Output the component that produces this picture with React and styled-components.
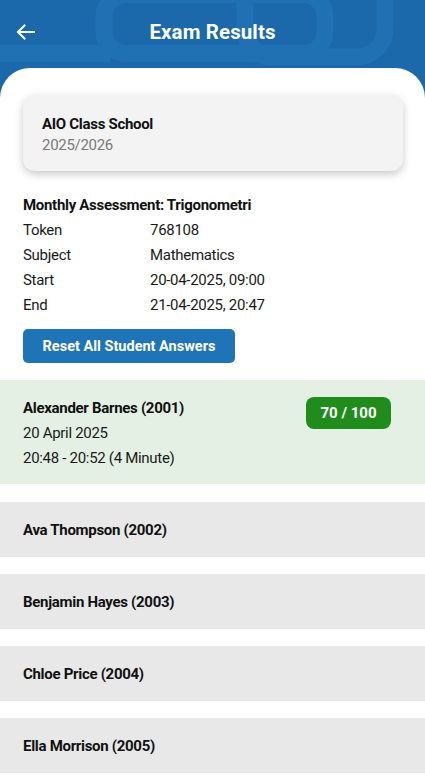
import React from "react";
import styled, { createGlobalStyle } from "styled-components";

const GlobalStyle = createGlobalStyle`
  html, body { margin: 0; padding: 0; background: #ffffff; }
  body { font-family: Roboto, "Noto Sans", "Liberation Sans", sans-serif; color: #111; }
  * { box-sizing: border-box; }
`;

const Page = styled.div`
  width: 425px;
  min-height: 783px;
  background: #ffffff;
  overflow: hidden;
`;

const Header = styled.header`
  position: relative;
  height: 98px;
  background: #1b68ab;
  overflow: hidden;
`;

const Pattern = styled.svg`
  position: absolute;
  inset: 0;
`;

const HeaderBar = styled.div`
  position: relative;
  height: 64px;
  display: flex;
  align-items: center;
  justify-content: center;
`;

const BackButton = styled.button`
  position: absolute;
  left: 12px;
  top: 20px;
  width: 26px;
  height: 24px;
  padding: 0;
  border: none;
  background: transparent;
  display: flex;
  align-items: center;
  justify-content: center;
`;

const Title = styled.h1`
  margin: 0;
  font-size: 20.5px;
  font-weight: 700;
  color: #ffffff;
  letter-spacing: 0.1px;
`;

const Sheet = styled.main`
  position: relative;
  margin-top: -30px;
  background: #ffffff;
  border-radius: 30px 30px 0 0;
  padding-top: 27px;
`;

const SchoolCard = styled.section`
  margin: 0 22px 0 23px;
  height: 76px;
  background: #f3f3f3;
  border-radius: 12px;
  box-shadow: 0 3px 8px rgba(0, 0, 0, 0.22);
  padding: 21px 19px 18px;
  display: flex;
  flex-direction: column;
  justify-content: center;
  gap: 2px;
  letter-spacing: -0.3px;
`;

const SchoolName = styled.div`
  font-size: 15px;
  font-weight: 700;
  color: #111;
  line-height: 19px;
`;

const SchoolYear = styled.div`
  font-size: 15px;
  color: #7a7a7a;
  line-height: 19px;
`;

const Info = styled.section`
  padding: 22px 23px 0;
  letter-spacing: -0.3px;
`;

const InfoTitle = styled.div`
  font-size: 15px;
  font-weight: 700;
  line-height: 25px;
  color: #111;
`;

const InfoRow = styled.div`
  display: grid;
  grid-template-columns: 127px 1fr;
  font-size: 15px;
  line-height: 25px;
  color: #1a1a1a;
`;

const ResetButton = styled.button`
  margin: 11px 0 0 23px;
  width: 212px;
  height: 34px;
  border: none;
  border-radius: 5px;
  background: #1f74b7;
  color: #ffffff;
  font-family: inherit;
  font-size: 14.5px;
  font-weight: 700;
  display: flex;
  align-items: center;
  justify-content: center;
`;

const Results = styled.section`
  margin-top: 17px;
  display: flex;
  flex-direction: column;
  gap: 17px;
  letter-spacing: -0.3px;
`;

const StudentRow = styled.div`
  background: ${(p) => (p.$done ? "#e4f0e3" : "#e8e8e8")};
  padding: ${(p) => (p.$done ? "16px 34px 13px 23px" : "16px 23px 14px")};
  min-height: ${(p) => (p.$done ? "104px" : "55px")};
  margin-bottom: ${(p) => (p.$done ? "1px" : "0")};
  display: flex;
  align-items: ${(p) => (p.$done ? "flex-start" : "center")};
  justify-content: space-between;
`;

const StudentText = styled.div`
  display: flex;
  flex-direction: column;
`;

const StudentName = styled.div`
  font-size: 15px;
  font-weight: 700;
  line-height: 25px;
  color: #111;
`;

const StudentDetail = styled.div`
  font-size: 15px;
  line-height: 25px;
  color: #1a1a1a;
`;

const ScoreBadge = styled.div`
  margin-top: 1px;
  width: 85px;
  height: 32px;
  border-radius: 8px;
  background: #1f8c1c;
  color: #ffffff;
  font-size: 15px;
  font-weight: 700;
  letter-spacing: 0;
  display: flex;
  align-items: center;
  justify-content: center;
`;

const students = [
  { name: "Alexander Barnes (2001)", date: "20 April 2025", time: "20:48 - 20:52 (4 Minute)", score: "70 / 100" },
  { name: "Ava Thompson (2002)" },
  { name: "Benjamin Hayes (2003)" },
  { name: "Chloe Price (2004)" },
  { name: "Ella Morrison (2005)" },
];

const info = [
  ["Token", "768108"],
  ["Subject", "Mathematics"],
  ["Start", "20-04-2025, 09:00"],
  ["End", "21-04-2025, 20:47"],
];

export default function App() {
  return (
    <Page>
      <GlobalStyle />
      <Header>
        <Pattern width="425" height="98" viewBox="0 0 425 98">
          <g fill="none" stroke="#1f71b3" strokeWidth="17">
            <rect x="104" y="-5.5" width="221" height="59" rx="22" />
            <rect x="245" y="-30" width="140" height="87" rx="28" />
          </g>
          <rect x="0" y="45" width="110" height="17" fill="#1f71b3" />
        </Pattern>
        <HeaderBar>
          <BackButton aria-label="Back">
            <svg width="20" height="18" viewBox="0 0 20 18">
              <path d="M19 9H3M9.5 2.5L3 9l6.5 6.5" fill="none" stroke="#ffffff" strokeWidth="2" strokeLinecap="square" />
            </svg>
          </BackButton>
          <Title>Exam Results</Title>
        </HeaderBar>
      </Header>
      <Sheet>
        <SchoolCard>
          <SchoolName>AIO Class School</SchoolName>
          <SchoolYear>2025/2026</SchoolYear>
        </SchoolCard>
        <Info>
          <InfoTitle>Monthly Assessment: Trigonometri</InfoTitle>
          {info.map(([k, v]) => (
            <InfoRow key={k}>
              <span>{k}</span>
              <span>{v}</span>
            </InfoRow>
          ))}
        </Info>
        <ResetButton>Reset All Student Answers</ResetButton>
        <Results>
          {students.map((s) => (
            <StudentRow key={s.name} $done={!!s.score}>
              <StudentText>
                <StudentName>{s.name}</StudentName>
                {s.date && <StudentDetail>{s.date}</StudentDetail>}
                {s.time && <StudentDetail>{s.time}</StudentDetail>}
              </StudentText>
              {s.score && <ScoreBadge>{s.score}</ScoreBadge>}
            </StudentRow>
          ))}
        </Results>
      </Sheet>
    </Page>
  );
}
